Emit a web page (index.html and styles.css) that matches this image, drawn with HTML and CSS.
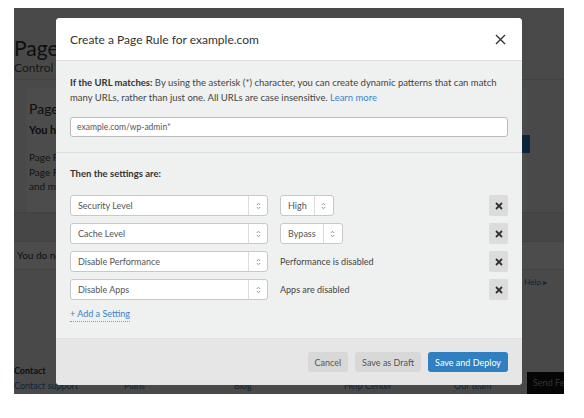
FILE: index.html
```html
<!DOCTYPE html>
<html>
<head>
<meta charset="utf-8">
<link rel="stylesheet" href="styles.css">
</head>
<body>
<div class="screen">
  <div class="page">
    <div class="page-head">
      <div class="page-title">Page Rules</div>
      <div class="page-sub">Control your settings by URL</div>
    </div>
    <div class="card">
      <div class="card-title">Page Rules</div>
      <div class="card-bold">You have 3 Rules available.</div>
      <div class="card-text">Page Rules let you control which Cloudflare settings trigger on a given URL.<br>Page Rules are evaluated in order from top to bottom<br>and match the first rule only.</div>
      <div class="card-btn"></div>
    </div>
    <div class="band"></div>
    <div class="empty">You do not have any Page Rules yet.</div>
    <div class="help-row"><span class="help">Help ▸</span></div>
    <div class="foot">
      <div class="foot-title">Contact</div>
      <div class="foot-links">
        <span>Contact support</span><span>Plans</span><span>Blog</span><span>Help Center</span><span>Our team</span>
      </div>
    </div>
    <div class="send">Send Fe</div>
  </div>
  <div class="overlay"></div>
  <div class="modal">
    <div class="modal-head">
      <div class="modal-title">Create a Page Rule for example.com</div>
      <svg class="close" width="11" height="11" viewBox="0 0 11 11"><path d="M1 1L10 10M10 1L1 10" stroke="#333" stroke-width="1.4" fill="none"/></svg>
    </div>
    <div class="section">
      <p class="intro"><b>If the URL matches:</b> By using the asterisk (*) character, you can create dynamic patterns that can match many URLs, rather than just one. All URLs are case insensitive. <a class="link">Learn more</a></p>
      <div class="input">example.com/wp-admin*</div>
    </div>
    <div class="section settings">
      <div class="label">Then the settings are:</div>
      <div class="row">
        <div class="select wide"><span class="val">Security Level</span><span class="arr"><svg width="5" height="8" viewBox="0 0 5 8"><path d="M0.8 3L2.5 1.3L4.2 3M0.8 5L2.5 6.7L4.2 5" stroke="#888" stroke-width="0.9" fill="none"/></svg></span></div>
        <div class="select"><span class="val">High</span><span class="arr"><svg width="5" height="8" viewBox="0 0 5 8"><path d="M0.8 3L2.5 1.3L4.2 3M0.8 5L2.5 6.7L4.2 5" stroke="#888" stroke-width="0.9" fill="none"/></svg></span></div>
        <div class="spacer"></div>
        <div class="del"><svg width="8" height="8" viewBox="0 0 8 8"><path d="M1 1L7 7M7 1L1 7" stroke="#333" stroke-width="1.8" fill="none"/></svg></div>
      </div>
      <div class="row">
        <div class="select wide"><span class="val">Cache Level</span><span class="arr"><svg width="5" height="8" viewBox="0 0 5 8"><path d="M0.8 3L2.5 1.3L4.2 3M0.8 5L2.5 6.7L4.2 5" stroke="#888" stroke-width="0.9" fill="none"/></svg></span></div>
        <div class="select"><span class="val">Bypass</span><span class="arr"><svg width="5" height="8" viewBox="0 0 5 8"><path d="M0.8 3L2.5 1.3L4.2 3M0.8 5L2.5 6.7L4.2 5" stroke="#888" stroke-width="0.9" fill="none"/></svg></span></div>
        <div class="spacer"></div>
        <div class="del"><svg width="8" height="8" viewBox="0 0 8 8"><path d="M1 1L7 7M7 1L1 7" stroke="#333" stroke-width="1.8" fill="none"/></svg></div>
      </div>
      <div class="row">
        <div class="select wide"><span class="val">Disable Performance</span><span class="arr"><svg width="5" height="8" viewBox="0 0 5 8"><path d="M0.8 3L2.5 1.3L4.2 3M0.8 5L2.5 6.7L4.2 5" stroke="#888" stroke-width="0.9" fill="none"/></svg></span></div>
        <div class="note">Performance is disabled</div>
        <div class="spacer"></div>
        <div class="del"><svg width="8" height="8" viewBox="0 0 8 8"><path d="M1 1L7 7M7 1L1 7" stroke="#333" stroke-width="1.8" fill="none"/></svg></div>
      </div>
      <div class="row">
        <div class="select wide"><span class="val">Disable Apps</span><span class="arr"><svg width="5" height="8" viewBox="0 0 5 8"><path d="M0.8 3L2.5 1.3L4.2 3M0.8 5L2.5 6.7L4.2 5" stroke="#888" stroke-width="0.9" fill="none"/></svg></span></div>
        <div class="note">Apps are disabled</div>
        <div class="spacer"></div>
        <div class="del"><svg width="8" height="8" viewBox="0 0 8 8"><path d="M1 1L7 7M7 1L1 7" stroke="#333" stroke-width="1.8" fill="none"/></svg></div>
      </div>
      <div class="add"><span class="add-link">+ Add a Setting</span></div>
    </div>
    <div class="modal-foot">
      <button class="btn">Cancel</button>
      <button class="btn">Save as Draft</button>
      <button class="btn primary">Save and Deploy</button>
    </div>
  </div>
</div>
</body>
</html>
```
FILE: styles.css
```css
* { box-sizing: border-box; }
html, body { margin: 0; padding: 0; background: #fff; }
body { font-family: Lato, "Open Sans", sans-serif; color: #333; }

.screen {
  position: relative;
  margin: 8px 0 0 14px;
  width: 550px;
  height: 386px;
  overflow: hidden;
  background: #f4f4f4;
}
.page { position: relative; height: 100%; }
.page-head { padding: 27px 0 0 0; background: #f4f4f4; height: 72px; border-bottom: 1px solid #ddd; }
.page-title { font-size: 21px; line-height: 26px; color: #333; }
.page-sub { font-size: 12px; line-height: 14px; color: #555; }
.card { position: relative; margin: 8px 38px 0 12px; background: #fff; padding: 12px 3px 14px; height: 124px; }
.card-title { font-size: 14px; line-height: 18px; }
.card-bold { font-size: 11px; font-weight: 700; margin-top: 5px; line-height: 14px; }
.card-text { font-size: 10px; line-height: 14.5px; margin-top: 13px; color: #444; }
.card-btn { position: absolute; right: -4px; top: 47px; width: 60px; height: 18px; background: #2f7bbf; }
.band { height: 30px; background: #eaeaea; border-top: 1px solid #ddd; border-bottom: 1px solid #ddd; }
.empty { font-size: 10px; padding: 4px 3px; height: 28px; line-height: 18px; color: #333; border-bottom: 1px solid #ddd; background: #fff; }
.help-row { display: flex; justify-content: flex-end; padding: 7px 17px 0 0; height: 95px; }
.help { font-size: 8px; color: #2f7bbf; }
.foot { padding: 0; }
.foot-title { font-size: 9px; font-weight: 700; line-height: 12px; }
.foot-links { display: flex; font-size: 9px; line-height: 14px; color: #2f7bbf; padding-top: 2px; }
.foot-links span { width: 110px; }
.send { position: absolute; right: 0; bottom: 0; width: 37px; height: 22px; background: #111; color: #aaa; font-size: 9px; line-height: 22px; padding-left: 6px; white-space: nowrap; }

.overlay { position: absolute; inset: 0; background: rgba(0,0,0,0.7); }

.modal {
  position: absolute;
  left: 42px; top: 10px;
  width: 466px; height: 367px;
  background: #eff0f0;
  border-radius: 4px;
  overflow: hidden;
  display: flex; flex-direction: column;
}
.modal-head {
  height: 43px; background: #fff; border-bottom: 1px solid #e0e0e0;
  display: flex; align-items: center; justify-content: space-between;
  padding: 0 16px 0 14px;
}
.modal-title { font-size: 12px; color: #333; }
.close { display: block; }
.section { padding: 14px 14px 0; }
.intro { margin: 0; font-size: 9.5px; line-height: 15px; color: #444; }
.intro b { color: #333; }
.link { color: #3a86c6; }
.input {
  margin-top: 12px; height: 20px; background: #fff; border: 1px solid #bbb; border-radius: 3px;
  font-size: 8.5px; color: #555; padding: 0 6px; line-height: 18px;
}
.settings { margin-top: 15px; border-top: 1px solid #ddd; padding-top: 13px; flex: 1; }
.label { font-size: 9.5px; font-weight: 700; line-height: 15px; color: #333; margin-bottom: 14px; }
.row { display: flex; align-items: center; height: 21px; margin-bottom: 7px; }
.select {
  display: flex; height: 21px; background: #fff; border: 1px solid #c8c8c8; border-radius: 3px;
  font-size: 9px; color: #555; margin-right: 12px;
}
.select.wide { width: 198px; }
.val { flex: 1; padding: 0 7px; line-height: 19px; }
.arr { width: 19px; border-left: 1px solid #ddd; display: flex; align-items: center; justify-content: center; }
.note { font-size: 9px; color: #444; }
.spacer { flex: 1; }
.del { width: 19px; height: 21px; background: #dcdcdc; border-radius: 2px; display: flex; align-items: center; justify-content: center; }
.add { display: flex; font-size: 9px; line-height: 14px; }
.add-link { color: #3a86c6; border-bottom: 1px dotted #999; }
.modal-foot {
  height: 47px; background: #e6e6e6; border-top: 1px solid #e0e0e0;
  display: flex; align-items: center; justify-content: flex-end; gap: 7px; padding: 0 14px;
}
.btn {
  font-family: inherit; height: 20px; border: 0; border-radius: 3px; background: #d8d8d8;
  color: #555; font-size: 9px; padding: 0 7px;
}
.btn.primary { background: #2f7fc1; color: #fff; }
```
